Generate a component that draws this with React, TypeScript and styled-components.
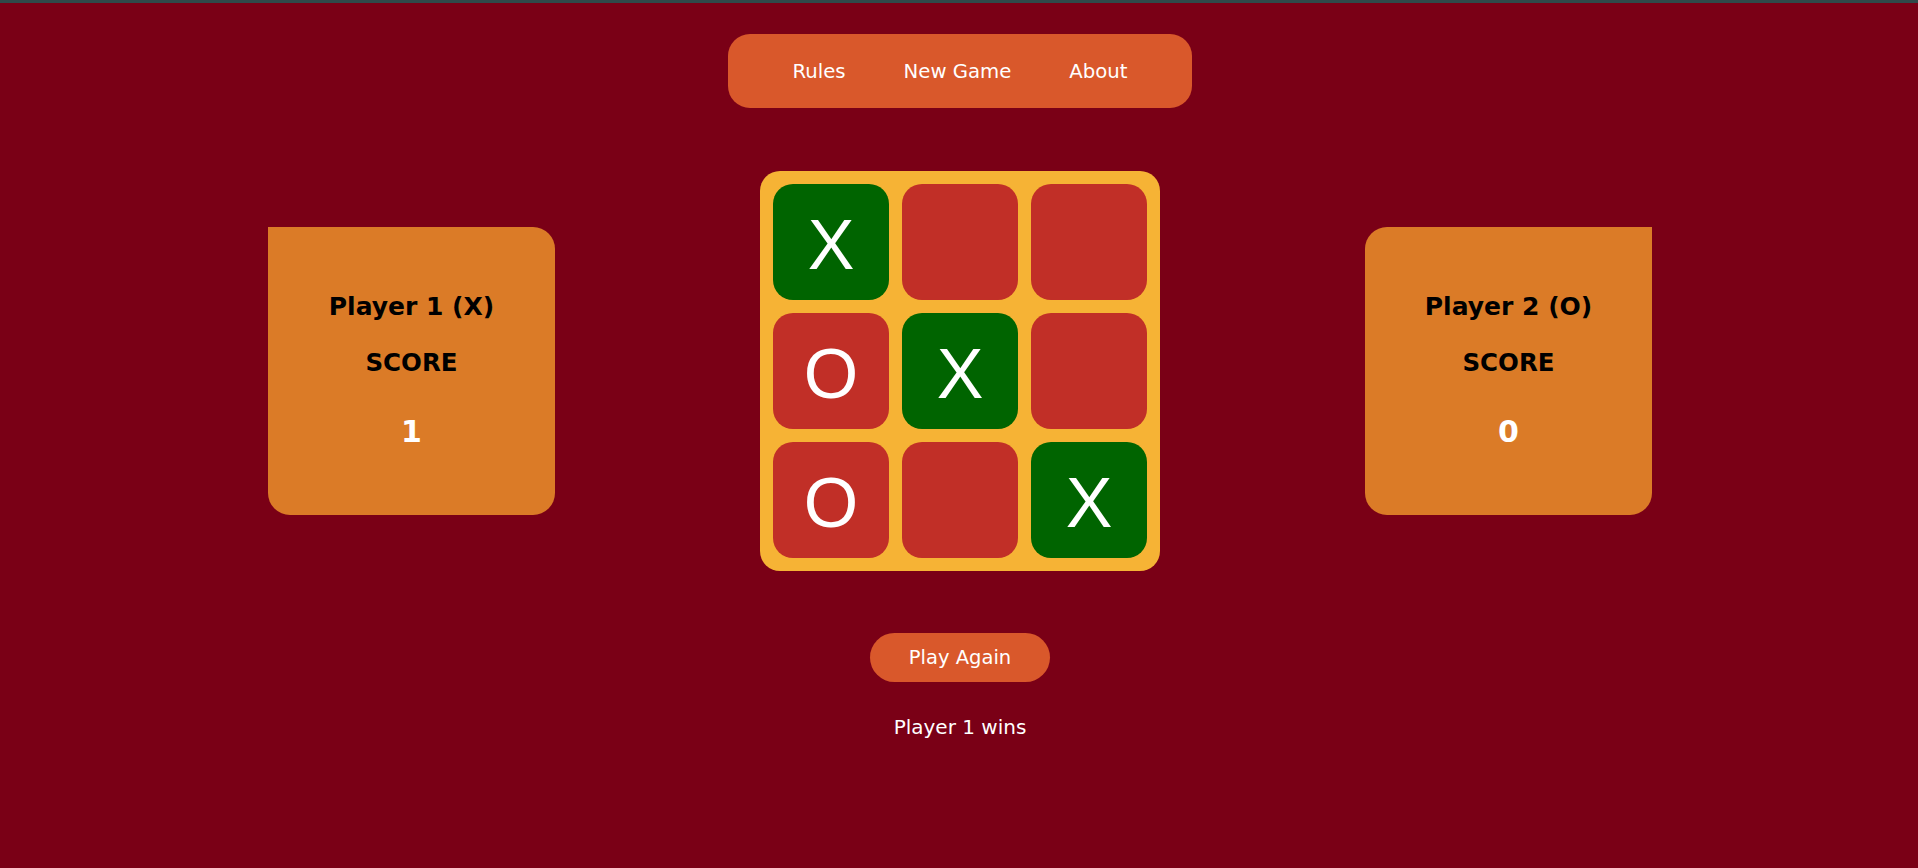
import styled, { createGlobalStyle } from 'styled-components';

const GlobalStyle = createGlobalStyle`
  html, body {
    margin: 0;
    padding: 0;
    background: #7a0016;
  }
  body {
    font-family: "DejaVu Sans", Verdana, sans-serif;
    border-top: 3px solid #2f4a4a;
    min-height: 865px;
  }
`;

type Mark = 'X' | 'O' | '';

const board: Mark[] = ['X', '', '', 'O', 'X', '', 'O', '', 'X'];
const winning = [0, 4, 8];

const App = () => {
  return (
    <>
      <GlobalStyle />
      <Page>
        <Nav>
          <NavLink>Rules</NavLink>
          <NavLink>New Game</NavLink>
          <NavLink>About</NavLink>
        </Nav>

        <Arena>
          <PlayerCard $side="left">
            <PlayerName>Player 1 (X)</PlayerName>
            <ScoreLabel>SCORE</ScoreLabel>
            <ScoreValue>1</ScoreValue>
          </PlayerCard>

          <Board>
            {board.map((mark, i) => (
              <Cell key={i} $win={winning.includes(i)}>
                {mark}
              </Cell>
            ))}
          </Board>

          <PlayerCard $side="right">
            <PlayerName>Player 2 (O)</PlayerName>
            <ScoreLabel>SCORE</ScoreLabel>
            <ScoreValue>0</ScoreValue>
          </PlayerCard>
        </Arena>

        <PlayAgain>Play Again</PlayAgain>
        <Status>Player 1 wins</Status>
      </Page>
    </>
  );
};

const Page = styled.div`
  display: flex;
  flex-direction: column;
  align-items: center;
  padding-top: 31px;
  padding-left: 2px;
`;

const Nav = styled.nav`
  display: flex;
  align-items: center;
  gap: 58px;
  height: 74px;
  padding: 0 64px;
  background: #d9582b;
  border-radius: 22px;
`;

const NavLink = styled.a`
  color: #ffffff;
  font-size: 19.7px;
  cursor: pointer;
`;

const Arena = styled.div`
  display: flex;
  align-items: center;
  gap: 205px;
  margin-top: 63px;
`;

const PlayerCard = styled.div<{ $side: 'left' | 'right' }>`
  width: 287px;
  height: 288px;
  display: flex;
  flex-direction: column;
  align-items: center;
  justify-content: center;
  background: #db7b27;
  border-radius: ${(p) => (p.$side === 'left' ? '0 22px 22px 22px' : '22px 0 22px 22px')};
`;

const PlayerName = styled.div`
  font-size: 25px;
  font-weight: bold;
  line-height: 30px;
  color: #000;
`;

const ScoreLabel = styled.div`
  font-size: 24.5px;
  font-weight: bold;
  line-height: 30px;
  color: #000;
  margin-top: 26px;
`;

const ScoreValue = styled.div`
  font-size: 30px;
  font-weight: bold;
  line-height: 36px;
  color: #fff;
  margin-top: 36px;
`;

const Board = styled.div`
  width: 400px;
  height: 400px;
  box-sizing: border-box;
  padding: 13px;
  display: grid;
  grid-template-columns: repeat(3, 1fr);
  grid-template-rows: repeat(3, 1fr);
  gap: 13px;
  background: #f6b335;
  border-radius: 20px;
`;

const Cell = styled.div<{ $win: boolean }>`
  display: flex;
  align-items: center;
  justify-content: center;
  padding-top: 5px;
  box-sizing: border-box;
  background: ${(p) => (p.$win ? '#006400' : '#c12f27')};
  border-radius: 20px;
  color: #fff;
  font-family: "Liberation Sans", Arial, sans-serif;
  font-size: 70px;
  line-height: 1;
`;

const PlayAgain = styled.button`
  margin-top: 62px;
  width: 180px;
  height: 49px;
  border: none;
  border-radius: 25px;
  background: #d9582b;
  color: #fff;
  font-family: "DejaVu Sans", Verdana, sans-serif;
  font-size: 19.5px;
  cursor: pointer;
`;

const Status = styled.p`
  margin: 33px 0 0;
  color: #fff;
  font-size: 20px;
  line-height: 24px;
`;

export default App;
